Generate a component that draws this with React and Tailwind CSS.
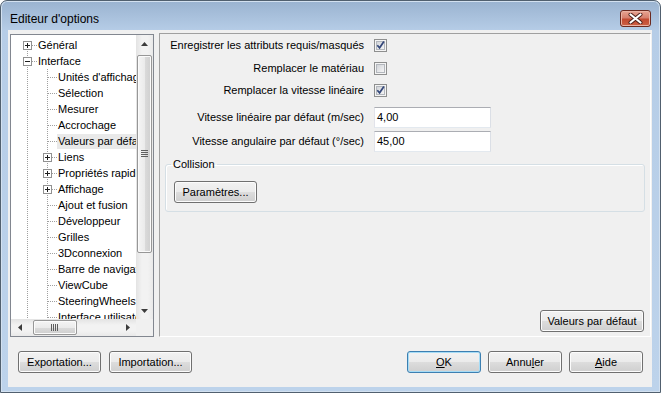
import React from "react";

const btn =
  "h-[22px] flex items-center justify-center rounded-[3px] border border-[#707070] bg-[linear-gradient(to_bottom,#f2f2f2_0%,#ebebeb_49%,#dddddd_50%,#cfcfcf_100%)] shadow-[inset_0_0_0_1px_#fcfcfc] text-[11px] leading-[13px] text-black";
const btnDefault =
  "h-[22px] flex items-center justify-center rounded-[3px] border border-[#3c7fb1] bg-[linear-gradient(to_bottom,#f2f2f2_0%,#ebebeb_49%,#dddddd_50%,#cfcfcf_100%)] shadow-[inset_0_0_0_1px_#a6dcf6] text-[11px] leading-[13px] text-black";

function Cell({ top, bottom, h, box }) {
  const dot = { stroke: "#a0a0a0", strokeDasharray: "1 1" };
  return (
    <svg width="20" height="16" className="block shrink-0">
      {top && <line x1="10.5" y1="0" x2="10.5" y2="8" {...dot} />}
      {bottom && <line x1="10.5" y1="8" x2="10.5" y2="16" {...dot} />}
      {h && <line x1="11" y1="8.5" x2="20" y2="8.5" {...dot} />}
      {box && (
        <g>
          <rect x="6.5" y="4.5" width="8" height="8" fill="#fff" stroke="#919191" />
          <line x1="8" y1="8.5" x2="13" y2="8.5" stroke="#1e1e1e" />
          {box === "+" && <line x1="10.5" y1="6" x2="10.5" y2="11" stroke="#1e1e1e" />}
        </g>
      )}
    </svg>
  );
}

const children = [
  { t: "Unités d'affichage" },
  { t: "Sélection" },
  { t: "Mesurer" },
  { t: "Accrochage" },
  { t: "Valeurs par défaut", sel: true },
  { t: "Liens", box: "+" },
  { t: "Propriétés rapides", box: "+" },
  { t: "Affichage", box: "+" },
  { t: "Ajout et fusion" },
  { t: "Développeur" },
  { t: "Grilles" },
  { t: "3Dconnexion" },
  { t: "Barre de navigation" },
  { t: "ViewCube" },
  { t: "SteeringWheels" },
  { t: "Interface utilisateur" },
];

function Checkbox({ checked }) {
  return (
    <svg width="13" height="13" className="block shrink-0">
      <defs>
        <linearGradient id="cbfill" x1="0" y1="0" x2="1" y2="1">
          <stop offset="0" stopColor="#cfd2d7" />
          <stop offset="1" stopColor="#f7f7f7" />
        </linearGradient>
      </defs>
      <rect x="0.5" y="0.5" width="12" height="12" fill="#f4f4f4" stroke="#8e8f8f" />
      <rect x="2.5" y="2.5" width="8" height="8" fill="url(#cbfill)" stroke="#b3b7bd" />
      {checked && (
        <path d="M3.3 6.2 L5.6 8.8 L9.9 2.6" fill="none" stroke="#34477a" strokeWidth="1.7" />
      )}
    </svg>
  );
}

function VGrip() {
  return (
    <svg width="8" height="8" className="block">
      <line x1="0" y1="0.5" x2="7" y2="0.5" stroke="#5f5f5f" />
      <line x1="0" y1="2.5" x2="7" y2="2.5" stroke="#5f5f5f" />
      <line x1="0" y1="4.5" x2="7" y2="4.5" stroke="#5f5f5f" />
      <line x1="0" y1="6.5" x2="7" y2="6.5" stroke="#5f5f5f" />
    </svg>
  );
}

function HGrip() {
  return (
    <svg width="8" height="8" className="block">
      <line x1="0.5" y1="0" x2="0.5" y2="7" stroke="#5f5f5f" />
      <line x1="2.5" y1="0" x2="2.5" y2="7" stroke="#5f5f5f" />
      <line x1="4.5" y1="0" x2="4.5" y2="7" stroke="#5f5f5f" />
      <line x1="6.5" y1="0" x2="6.5" y2="7" stroke="#5f5f5f" />
    </svg>
  );
}

function Arrow({ dir }) {
  const pts = {
    up: "0,4 3.5,0 7,4",
    down: "0,0 3.5,4 7,0",
    left: "4,0 0,3.5 4,7",
    right: "0,0 4,3.5 0,7",
  }[dir];
  const vert = dir === "up" || dir === "down";
  return (
    <svg width={vert ? 7 : 4} height={vert ? 4 : 7} className="block">
      <polygon points={pts} fill="#3c3c3c" />
    </svg>
  );
}

export default function App() {
  return (
    <div className="w-[661px] h-[393px] bg-white">
      <div className="w-[661px] h-[393px] flex flex-col rounded-t-[7px] border border-[#51606f] bg-[linear-gradient(to_bottom,#9ab3d0_0px,#b6cde7_30px,#bdd3eb_100%)] shadow-[inset_0_0_0_1px_#d3e1f0] font-['Liberation_Sans',Arial,sans-serif] text-black">
        {/* Title bar */}
        <div className="h-[29px] flex items-start justify-between shrink-0">
          <div className="pl-[9px] pt-[10px] text-[12px] leading-[16px]">Editeur d'options</div>
          <div className="mt-[9px] mr-[9px] w-[31px] h-[17px] rounded-[3px] border border-[#6b2a20] bg-[linear-gradient(to_bottom,#e8a493_0%,#d6806e_45%,#c24a31_55%,#cd6145_100%)] shadow-[inset_0_0_0_1px_#eab3a4] flex items-center justify-center">
            <svg width="15" height="11" className="block">
              <path d="M2.5 1.5 L12.5 9.5 M12.5 1.5 L2.5 9.5" stroke="#4a1e18" strokeWidth="4" strokeLinecap="round" />
              <path d="M2.5 1.5 L12.5 9.5 M12.5 1.5 L2.5 9.5" stroke="#ffffff" strokeWidth="2.2" strokeLinecap="round" />
            </svg>
          </div>
        </div>

        {/* Client area */}
        <div className="ml-[7px] w-[644px] h-[357px] bg-[#f0f0f0] flex flex-col shrink-0 text-[11px]">
          <div className="flex items-start pl-[2px] pt-[3px]">
            {/* Tree */}
            <div className="mt-[1px] w-[144px] h-[303px] border border-[#828790] bg-white flex flex-col">
              <div className="flex h-[284px]">
                <div className="w-[125px] overflow-hidden pt-[2px] pl-[6px]">
                  <div className="flex h-[16px] items-center whitespace-nowrap">
                    <Cell bottom h box="+" />
                    <span className="pl-[1px] pr-[2px] leading-[14px]">Général</span>
                  </div>
                  <div className="flex h-[16px] items-center whitespace-nowrap">
                    <Cell top bottom h box="-" />
                    <span className="pl-[1px] pr-[2px] leading-[14px]">Interface</span>
                  </div>
                  {children.map((c) => (
                    <div key={c.t} className="flex h-[16px] items-center whitespace-nowrap">
                      <Cell top bottom />
                      <Cell top bottom h box={c.box} />
                      <span
                        className={
                          c.sel
                            ? "pl-[1px] pr-[2px] leading-[15px] bg-[#e9e9e9]"
                            : "pl-[1px] pr-[2px] leading-[15px]"
                        }
                      >
                        {c.t}
                      </span>
                    </div>
                  ))}
                </div>
                {/* vertical scrollbar */}
                <div className="w-[17px] flex flex-col bg-[linear-gradient(to_right,#e3e3e3,#f2f2f2_35%,#f2f2f2_70%,#e9e9e9)]">
                  <div className="h-[17px] flex items-center justify-center">
                    <Arrow dir="up" />
                  </div>
                  <div className="mt-[3px] mx-[1px] h-[198px] rounded-[2px] border border-[#979797] bg-[linear-gradient(to_right,#f5f5f5_0%,#ebebeb_50%,#dbdbdb_51%,#cfcfcf_100%)] shadow-[inset_0_0_0_1px_#fbfbfb] flex items-center justify-center">
                    <VGrip />
                  </div>
                  <div className="flex-1" />
                  <div className="h-[17px] flex items-center justify-center">
                    <Arrow dir="down" />
                  </div>
                </div>
              </div>
              <div className="flex h-[17px]">
                <div className="w-[125px] flex bg-[linear-gradient(to_bottom,#e3e3e3,#f2f2f2_35%,#f2f2f2_70%,#e9e9e9)]">
                  <div className="w-[17px] flex items-center justify-center">
                    <Arrow dir="left" />
                  </div>
                  <div className="ml-[5px] my-[1px] w-[44px] rounded-[2px] border border-[#979797] bg-[linear-gradient(to_bottom,#f5f5f5_0%,#ebebeb_50%,#dbdbdb_51%,#cfcfcf_100%)] shadow-[inset_0_0_0_1px_#fbfbfb] flex items-center justify-center">
                    <HGrip />
                  </div>
                  <div className="flex-1" />
                  <div className="w-[17px] flex items-center justify-center">
                    <Arrow dir="right" />
                  </div>
                </div>
                <div className="w-[17px] bg-[#f0f0f0]" />
              </div>
            </div>

            {/* Right panel */}
            <div className="ml-[5px] w-[492px] h-[304px] border border-t-[#a0a0a0] border-l-[#a0a0a0] border-r-white border-b-white flex flex-col">
              <div className="flex items-center mt-[5px] h-[13px]">
                <div className="w-[204px] text-right whitespace-nowrap leading-[13px]">Enregistrer les attributs requis/masqués</div>
                <div className="ml-[10px]"><Checkbox checked /></div>
              </div>
              <div className="flex items-center mt-[10px] h-[13px]">
                <div className="w-[204px] text-right whitespace-nowrap leading-[13px]">Remplacer le matériau</div>
                <div className="ml-[10px]"><Checkbox /></div>
              </div>
              <div className="flex items-center mt-[9px] h-[13px]">
                <div className="w-[204px] text-right whitespace-nowrap leading-[13px]">Remplacer la vitesse linéaire</div>
                <div className="ml-[10px]"><Checkbox checked /></div>
              </div>
              <div className="flex items-center mt-[10px] h-[21px]">
                <div className="w-[204px] text-right whitespace-nowrap leading-[13px]">Vitesse linéaire par défaut (m/sec)</div>
                <div className="ml-[10px] w-[117px] h-[21px] border border-t-[#abadb3] border-l-[#e2e3ea] border-r-[#dbdfe6] border-b-[#e3e9ef] bg-white flex items-center pl-[2px] leading-[13px]">4,00</div>
              </div>
              <div className="flex items-center mt-[3px] h-[21px]">
                <div className="w-[204px] text-right whitespace-nowrap leading-[13px]">Vitesse angulaire par défaut (°/sec)</div>
                <div className="ml-[10px] w-[117px] h-[21px] border border-t-[#abadb3] border-l-[#e2e3ea] border-r-[#dbdfe6] border-b-[#e3e9ef] bg-white flex items-center pl-[2px] leading-[13px]">45,00</div>
              </div>
              <fieldset className="mt-[6px] ml-[5px] w-[480px] rounded-[3px] border border-[#d5dfe5] shadow-[inset_1px_1px_0_#ffffff] px-[8px] pt-[10px] pb-[8px]">
                <legend className="ml-[-3px] px-[2px] leading-[13px]">Collision</legend>
                <div className={btn + " w-[83px]"}>Paramètres...</div>
              </fieldset>
              <div className="flex-1" />
              <div className="self-end mr-[6px] mb-[4px]">
                <div className={btn + " w-[104px]"}>Valeurs par défaut</div>
              </div>
            </div>
          </div>

          {/* Bottom buttons */}
          <div className="flex items-center mt-[14px] pl-[10px] pr-[9px]">
            <div className={btn + " w-[83px]"}>Exportation...</div>
            <div className={btn + " w-[83px] ml-[8px]"}>Importation...</div>
            <div className="flex-1" />
            <div className={btnDefault + " w-[74px]"}>
              <span><span className="underline">O</span>K</span>
            </div>
            <div className={btn + " w-[74px] ml-[7px]"}>
              <span>Annu<span className="underline">l</span>er</span>
            </div>
            <div className={btn + " w-[74px] ml-[7px]"}>
              <span><span className="underline">A</span>ide</span>
            </div>
          </div>
        </div>
      </div>
    </div>
  );
}
